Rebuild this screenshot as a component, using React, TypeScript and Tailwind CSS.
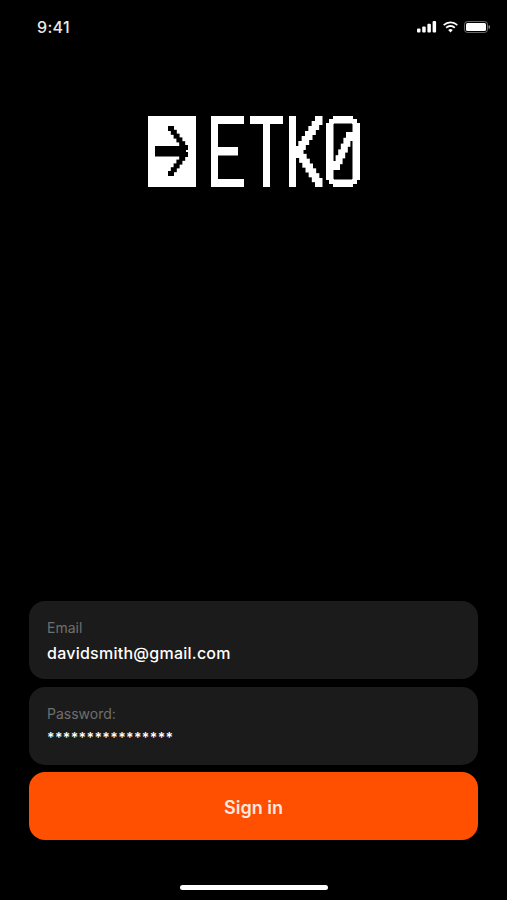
import React from 'react';

type Box = [number, number, number, number];

// staircase between two points, for the pixel logo
const stairs = (x0: number, y0: number, x1: number, y1: number, n: number, w: number, h: number): Box[] =>
    Array.from({ length: n }, (_, i) => {
        const t = n === 1 ? 0 : i / (n - 1);
        return [x0 + (x1 - x0) * t, y0 + (y1 - y0) * t, w, h] as Box;
    });

const whiteBoxes: Box[] = [
    // E
    [211, 116, 7, 71], [211, 116, 33, 8], [211, 147, 27, 8.5], [211, 179, 33, 8],
    // T
    [250, 116, 33, 8], [263, 116, 7, 71],
    // K
    [289, 116, 7, 71],
    ...stairs(295, 146, 315, 116, 7, 7.5, 9),
    ...stairs(296, 149, 315, 178, 7, 7.5, 9),
    // 0
    [326, 123, 7.5, 57], [352.5, 123, 7.5, 57], [333, 116, 20, 7.5], [333, 179.5, 20, 7.5],
    [329, 119, 5, 5], [352, 119, 5, 5], [329, 179, 5, 5], [352, 179, 5, 5],
    ...stairs(333, 161, 346, 132, 6, 7, 9),
];

const blackBoxes: Box[] = [
    [155, 146, 31, 10.5],
    ...stairs(168, 126, 182, 145, 6, 6, 5),
    ...stairs(182, 152, 168, 171, 6, 6, 5),
];

const Logo = () => (
    <svg viewBox="148 116 212 71" width={212} height={71}>
        <rect x={148} y={116} width={48} height={71} fill="#fff" />
        {blackBoxes.map(([x, y, w, h], i) => (
            <rect key={i} x={x} y={y} width={w} height={h} fill="#000" />
        ))}
        {whiteBoxes.map(([x, y, w, h], i) => (
            <rect key={i} x={x} y={y} width={w} height={h} fill="#fff" />
        ))}
    </svg>
);

const StatusIcons = () => (
    <svg width={74} height={14} viewBox="0 0 74 14" fill="#fff">
        <rect x={0} y={8.5} width={3.5} height={4} rx={1} />
        <rect x={5.2} y={6.5} width={3.5} height={6} rx={1} />
        <rect x={10.4} y={3.8} width={3.5} height={8.7} rx={1} />
        <rect x={15.6} y={1} width={3.5} height={11.5} rx={1} />
        <path d="M33.5 3.3c2.4 0 4.6.9 6.2 2.5l1.2-1.3A10.7 10.7 0 0 0 33.5 1.500a10.7 10.7 0 0 0-7.400 3l1.200 1.300a9 9 0 0 1 6.200-2.500z" />
        <path d="M33.500 6.900c1.400 0 2.700.5 3.700 1.500l1.200-1.300a7 7 0 0 0-9.800 0l1.200 1.300c1-1 2.300-1.500 3.700-1.500z" />
        <path d="M33.500 12.500l2.300-2.500a3.300 3.300 0 0 0-4.600 0z" />
        <rect x={47.500} y={1.500} width={23} height={11} rx={3} fill="none" stroke="#fff" strokeOpacity={0.4} />
        <rect x={49} y={3} width={20} height={8} rx={1.500} />
        <rect x={71.500} y={5.200} width={1.500} height={3.600} rx={0.700} fillOpacity={0.5} />
    </svg>
);

const Field = ({ label, children }: { label: string; children: React.ReactNode }) => (
    <div className="h-[78px] rounded-2xl bg-[#1b1b1b] px-[18px] pt-[18px]">
        <div className="text-sm leading-[18px] text-[#6f6f6f]">{label}</div>
        {children}
    </div>
);

export default function App() {
    return (
        <div className="relative flex h-[900px] w-[507px] flex-col overflow-hidden bg-black font-['Inter',sans-serif] text-white antialiased">
            <div className="flex items-center justify-between pl-[37px] pr-[16px] pt-[16px]">
                <span className="pt-px text-base font-medium leading-5 tracking-[0.3px] text-[#e8e8e8]">9:41</span>
                <StatusIcons />
            </div>
            <div className="mt-[79px] flex justify-center pl-[1px]">
                <Logo />
            </div>
            <div className="mx-[29px] mt-auto flex flex-col gap-2">
                <Field label="Email">
                    <div className="mt-[6px] text-base font-medium leading-5 tracking-[0.25px]">davidsmith@gmail.com</div>
                </Field>
                <Field label="Password:">
                    <div className="mt-[5px] text-sm font-semibold leading-5 tracking-[0.35px]">****************</div>
                </Field>
                <button className="-mt-px h-[68px] rounded-2xl bg-[#ff4f00] pt-[3px] text-lg font-semibold text-[#fbe9e0]">Sign in</button>
            </div>
            <div className="mx-auto mb-[10px] mt-[45px] h-[5px] w-[148px] rounded-full bg-white" />
        </div>
    );
}
